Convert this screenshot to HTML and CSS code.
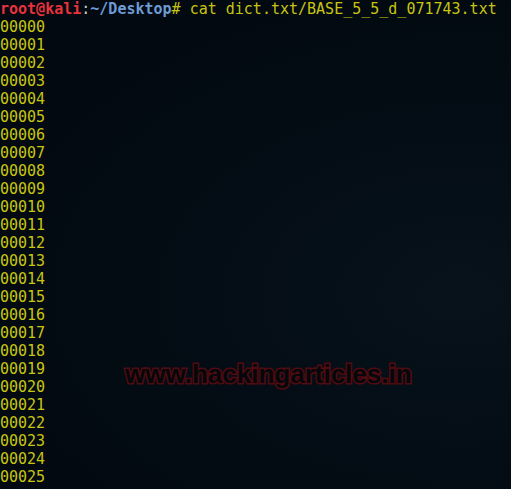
FILE: index.html
```html
<!DOCTYPE html>
<html>
<head>
<meta charset="utf-8" />
<title>Terminal</title>
<link rel="stylesheet" href="styles.css">
</head>
<body>
<div class="term" id="term">
    <div class="line"><span class="user">root@kali</span><span class="colon">:</span><span class="path">~/Desktop</span><span class="cmd"># cat dict.txt/BASE_5_5_d_071743.txt</span></div>
</div>
<div class="mark">www.hackingarticles.in</div>
<script>
var termNode=document.getElementById("term");
var frag=document.createDocumentFragment();
for(var i=0;i<=25;i++){//00000 - 00025
    var div=document.createElement("div");
    div.className="line";
    div.innerHTML=("0000"+i).slice(-5);
    frag.appendChild(div);
}
termNode.appendChild(frag);
</script>
</body>
</html>
```
FILE: styles.css
```css
html,body{ margin:0; padding:0; height:100%; overflow:hidden;}
body{
    background:#020911;
    background:radial-gradient(ellipse at 90% 60%,#07121a 0%,#040d15 40%,#020910 80%);
    position:relative;
}
.term{ font-family:"DejaVu Sans Mono",monospace; font-size:15px; line-height:18px; color:#c8c510;}
.line{ white-space:pre; height:18px;}
.user{ color:#e8323c; font-weight:bold;}
.colon{ color:#c9c9c9;}
.path{ color:#6e9bd6; font-weight:bold;}
.mark{
    position:absolute; left:125px; top:361px;
    font-family:"Liberation Sans",sans-serif; font-weight:bold; font-size:26px; line-height:26px;
    color:#04070b;
    -webkit-text-stroke:3px #520b10;
    paint-order:stroke fill;
}
```
